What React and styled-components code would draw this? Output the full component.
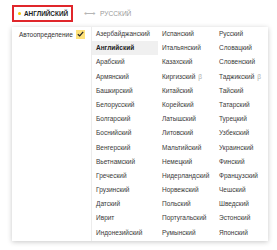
import styled, { createGlobalStyle } from "styled-components";

const GlobalStyle = createGlobalStyle`
  body {
    margin: 0;
    background: #fff;
    font-family: "Liberation Sans", Arial, sans-serif;
  }
`;

const Page = styled.div`
  width: 277px;
  height: 250px;
  padding: 5px 0 0 12px;
  box-sizing: border-box;
`;

const Header = styled.div`
  display: flex;
  align-items: center;
  height: 17px;
`;

const ActiveLang = styled.div`
  display: flex;
  align-items: center;
  gap: 3px;
  height: 17px;
  box-sizing: border-box;
  border: 2px solid #e0262b;
  padding: 0 3px 0 4px;
  font-size: 6.4px;
  font-weight: 700;
  color: #222;
`;

const Dot = styled.span`
  width: 3px;
  height: 3px;
  border-radius: 50%;
  background: #f5c400;
`;

const Swap = styled.span`
  margin: 0 5px 0 11px;
  font-size: 8px;
  color: #b5b5b5;
`;

const TargetLang = styled.div`
  font-size: 6.6px;
  color: #9a9a9a;
`;

const Panel = styled.div`
  margin-top: 5px;
  width: 256px;
  height: 214px;
  display: flex;
  background: #fff;
  box-shadow: 0 1px 5px rgba(0, 0, 0, 0.22);
`;

const AutoColumn = styled.div`
  width: 80px;
  box-sizing: border-box;
  padding: 0 0 0 7px;
  border-right: 1px solid #ececec;
`;

const AutoRow = styled.div`
  display: flex;
  align-items: center;
  justify-content: space-between;
  height: 14px;
  padding-right: 6px;
  font-size: 6.5px;
  color: #333;
`;

const Check = styled.span`
  display: flex;
  align-items: center;
  justify-content: center;
  width: 9px;
  height: 9px;
  background: #ffe27a;
`;

const Columns = styled.div`
  display: grid;
  grid-template-columns: 66px 57px 53px;
`;

const Column = styled.div`
  display: flex;
  flex-direction: column;
`;

const Item = styled.div`
  height: 14.2px;
  line-height: 14.2px;
  padding-left: 4px;
  font-size: 6.5px;
  white-space: nowrap;
  color: ${(p) => (p.$active ? "#222" : "#3a3a3a")};
  font-weight: ${(p) => (p.$active ? 700 : 400)};
  background: ${(p) => (p.$active ? "#f0f0f0" : "transparent")};
`;

const Beta = styled.span`
  margin-left: 3px;
  color: #aaa;
`;

const columns = [
  [
    "Азербайджанский",
    "Английский",
    "Арабский",
    "Армянский",
    "Башкирский",
    "Белорусский",
    "Болгарский",
    "Боснийский",
    "Венгерский",
    "Вьетнамский",
    "Греческий",
    "Грузинский",
    "Датский",
    "Иврит",
    "Индонезийский",
  ],
  [
    "Испанский",
    "Итальянский",
    "Казахский",
    "Киргизский β",
    "Китайский",
    "Корейский",
    "Латышский",
    "Литовский",
    "Мальтийский",
    "Немецкий",
    "Нидерландский",
    "Норвежский",
    "Польский",
    "Португальский",
    "Румынский",
  ],
  [
    "Русский",
    "Словацкий",
    "Словенский",
    "Таджикский β",
    "Тайский",
    "Татарский",
    "Турецкий",
    "Узбекский",
    "Украинский",
    "Финский",
    "Французский",
    "Чешский",
    "Шведский",
    "Эстонский",
    "Японский",
  ],
];

function LangItem({ name }) {
  const beta = name.endsWith(" β");
  const label = beta ? name.slice(0, -2) : name;
  return (
    <Item $active={label === "Английский"}>
      {label}
      {beta && <Beta>β</Beta>}
    </Item>
  );
}

export default function App() {
  return (
    <Page>
      <GlobalStyle />
      <Header>
        <ActiveLang>
          <Dot />
          АНГЛИЙСКИЙ
        </ActiveLang>
        <Swap>⟷</Swap>
        <TargetLang>РУССКИЙ</TargetLang>
      </Header>
      <Panel>
        <AutoColumn>
          <AutoRow>
            Автоопределение
            <Check>
              <svg width="7" height="6" viewBox="0 0 7 6">
                <path d="M0.8 3.2 L2.7 5 L6.2 0.9" fill="none" stroke="#222" strokeWidth="1.2" />
              </svg>
            </Check>
          </AutoRow>
        </AutoColumn>
        <Columns>
          {columns.map((col, i) => (
            <Column key={i}>
              {col.map((name) => (
                <LangItem key={name} name={name} />
              ))}
            </Column>
          ))}
        </Columns>
      </Panel>
    </Page>
  );
}
